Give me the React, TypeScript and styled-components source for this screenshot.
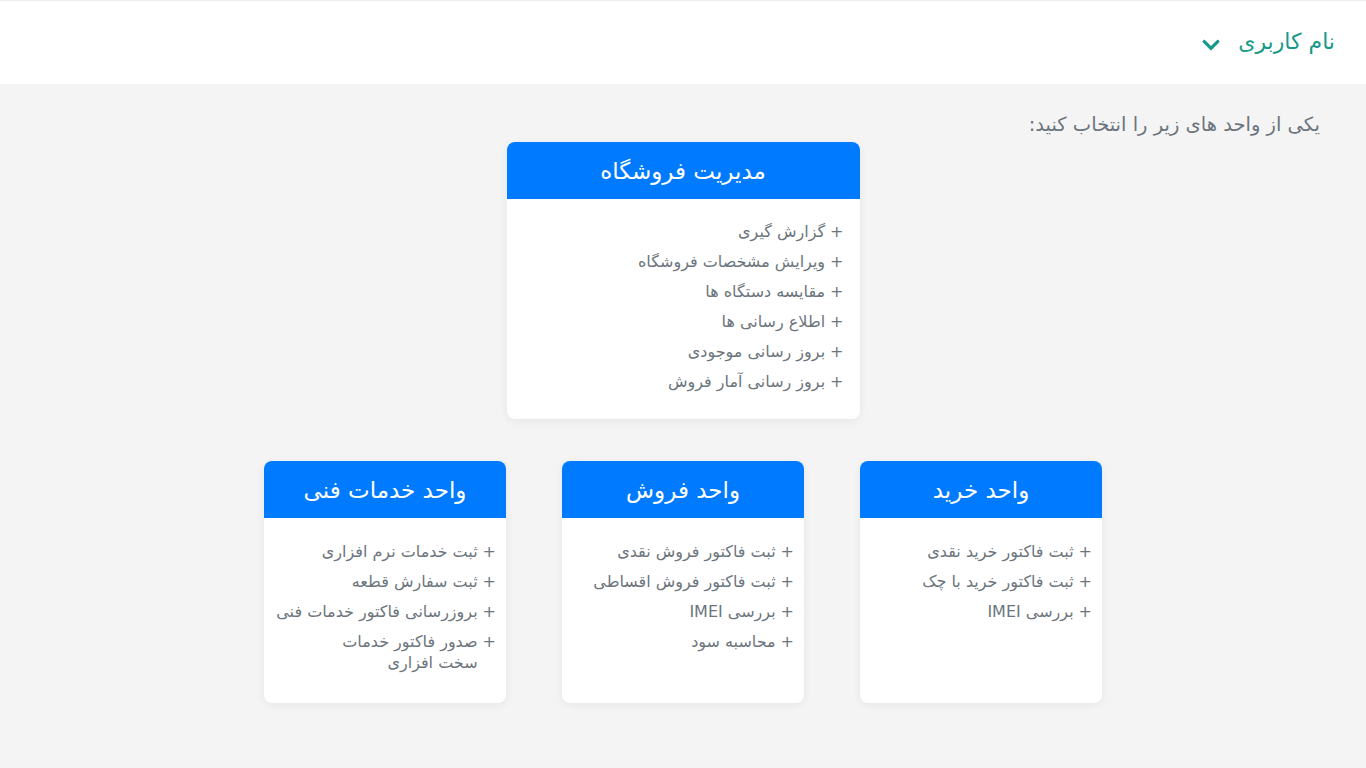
import React from 'react'
import styled, { createGlobalStyle } from 'styled-components'

const GlobalStyle = createGlobalStyle`
  html, body {
    margin: 0;
    padding: 0;
    background: #f4f4f4;
    font-family: 'DejaVu Sans', 'Noto Sans', sans-serif;
  }
  * { box-sizing: border-box; }
`

type Unit = { title: string; items: string[] }

const topUnit: Unit = {
  title: 'مدیریت فروشگاه',
  items: [
    'گزارش گیری',
    'ویرایش مشخصات فروشگاه',
    'مقایسه دستگاه ها',
    'اطلاع رسانی ها',
    'بروز رسانی موجودی',
    'بروز رسانی آمار فروش',
  ],
}

const units: Unit[] = [
  { title: 'واحد خرید', items: ['ثبت فاکتور خرید نقدی', 'ثبت فاکتور خرید با چک', 'بررسی IMEI'] },
  {
    title: 'واحد فروش',
    items: ['ثبت فاکتور فروش نقدی', 'ثبت فاکتور فروش اقساطی', 'بررسی IMEI', 'محاسبه سود'],
  },
  {
    title: 'واحد خدمات فنی',
    items: [
      'ثبت خدمات نرم افزاری',
      'ثبت سفارش قطعه',
      'بروزرسانی فاکتور خدمات فنی',
      'صدور فاکتور خدمات سخت\u00a0افزاری',
    ],
  },
]

const App = () => (
  <Page dir="rtl">
    <GlobalStyle />
    <Header>
      <UserMenu>
        نام کاربری
        <Chevron viewBox="0 0 448 512">
          <path d="M207.03 381.47 12.69 187.13c-9.37-9.37-9.37-24.57 0-33.94l22.67-22.67c9.36-9.36 24.52-9.38 33.9-.04L224 284.5l154.74-154.02c9.38-9.34 24.54-9.32 33.9.04l22.67 22.67c9.37 9.37 9.37 24.57 0 33.94L240.97 381.47c-9.37 9.37-24.57 9.37-33.94 0z" />
        </Chevron>
      </UserMenu>
    </Header>
    <Main>
      <Prompt>یکی از واحد های زیر را انتخاب کنید:</Prompt>
      <TopRow>
        <UnitCard unit={topUnit} wide />
      </TopRow>
      <BottomRow>
        {units.map(u => (
          <UnitCard key={u.title} unit={u} />
        ))}
      </BottomRow>
    </Main>
  </Page>
)

const UnitCard = ({ unit, wide }: { unit: Unit; wide?: boolean }) => (
  <Card $wide={wide}>
    <CardHeader>{unit.title}</CardHeader>
    <CardBody $wide={wide}>
      {unit.items.map(item => (
        <Item key={item}>
          <Plus>+</Plus>
          <span>{item}</span>
        </Item>
      ))}
    </CardBody>
  </Card>
)

const Page = styled.div`
  min-height: 768px;
  background: #f4f4f4;
`
const Header = styled.header`
  height: 84px;
  background: #fff;
  border-top: 1px solid #ececec;
  display: flex;
  align-items: center;
  padding: 0 31px;
`
const UserMenu = styled.div`
  display: flex;
  align-items: center;
  gap: 17px;
  color: #17998a;
  font-size: 22px;
  margin-top: -2px;
`
const Chevron = styled.svg`
  width: 20px;
  height: 20px;
  fill: #17998a;
  margin-top: 6px;
`
const Main = styled.main`
  padding: 26px 46px 0;
`
const Prompt = styled.div`
  color: #6c757d;
  font-size: 19.5px;
  line-height: 30px;
`
const TopRow = styled.div`
  display: flex;
  justify-content: center;
  margin-top: 2px;
`
const BottomRow = styled.div`
  display: flex;
  justify-content: center;
  gap: 56px;
  margin-top: 42px;
`
const Card = styled.div<{ $wide?: boolean }>`
  width: ${p => (p.$wide ? '353px' : '242px')};
  height: ${p => (p.$wide ? '277px' : '242px')};
  background: #fff;
  border-radius: 8px;
  overflow: hidden;
  box-shadow: 0 2px 10px rgba(0, 0, 0, 0.06);
`
const CardHeader = styled.div`
  height: 57px;
  background: #007bff;
  color: #fff;
  font-size: 23px;
  display: flex;
  align-items: center;
  justify-content: center;
`
const CardBody = styled.div<{ $wide?: boolean }>`
  padding: ${p => (p.$wide ? '22px 16px 0 0' : '23px 10px 0 0')};
  display: flex;
  flex-direction: column;
  gap: 9px;
`
const Item = styled.div`
  display: flex;
  gap: 5px;
  color: #6c757d;
  font-size: 16px;
  line-height: 21px;
`
const Plus = styled.span`
  flex: none;
`

export default App
